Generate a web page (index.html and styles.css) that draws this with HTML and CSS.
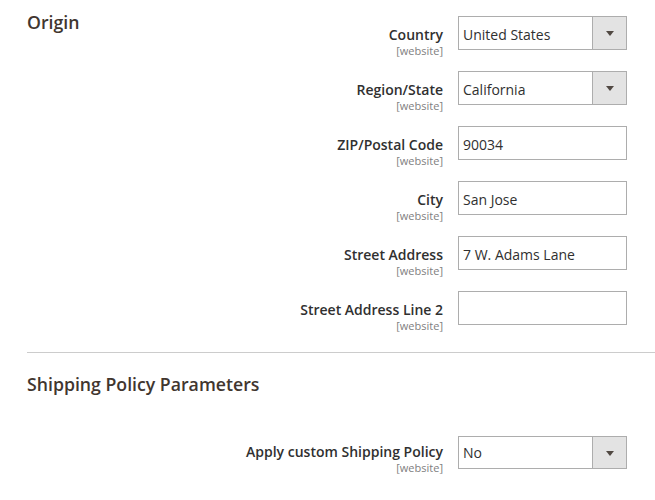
FILE: index.html
```
<!DOCTYPE html>
<html lang="en">
<head>
<meta charset="utf-8">
<title>Origin</title>
<link rel="stylesheet" href="styles.css">
</head>
<body>
<div class="page">
  <section class="section section-origin">
    <h2 class="section-title">Origin</h2>
    <div class="fields">
      <div class="label"><span class="label-text">Country</span><span class="scope">[website]</span></div>
      <div class="control select"><span class="value">United States</span><span class="arrow"><span class="tri"></span></span></div>

      <div class="label"><span class="label-text">Region/State</span><span class="scope">[website]</span></div>
      <div class="control select"><span class="value">California</span><span class="arrow"><span class="tri"></span></span></div>

      <div class="label"><span class="label-text">ZIP/Postal Code</span><span class="scope">[website]</span></div>
      <div class="control"><span class="value">90034</span></div>

      <div class="label"><span class="label-text">City</span><span class="scope">[website]</span></div>
      <div class="control"><span class="value">San Jose</span></div>

      <div class="label"><span class="label-text">Street Address</span><span class="scope">[website]</span></div>
      <div class="control"><span class="value">7 W. Adams Lane</span></div>

      <div class="label"><span class="label-text">Street Address Line 2</span><span class="scope">[website]</span></div>
      <div class="control"><span class="value"></span></div>
    </div>
  </section>

  <section class="section section-policy">
    <h2 class="section-title">Shipping Policy Parameters</h2>
    <div class="fields">
      <div class="label label-tight"><span class="label-text">Apply custom Shipping Policy</span><span class="scope">[website]</span></div>
      <div class="control select control-short"><span class="value value-high">No</span><span class="arrow"><span class="tri"></span></span></div>
    </div>
  </section>
</div>
</body>
</html>
```

FILE: styles.css
```
html, body {
  margin: 0;
  padding: 0;
  background: #ffffff;
}

body {
  font-family: "Open Sans", "Liberation Sans", sans-serif;
  color: #303030;
}

.page {
  width: 655px;
  padding-bottom: 20px;
}

.section {
  margin-left: 27px;
}

.section-origin {
  display: flex;
  padding-top: 14px;
  padding-bottom: 27px;
  border-bottom: 1px solid #cccccc;
}

.section-origin .section-title {
  width: 120px;
  flex: none;
}

.section-origin .fields {
  flex: 1;
  padding-top: 2px;
}

.section-title {
  margin: 0;
  font-size: 17.7px;
  line-height: 17px;
  font-weight: 600;
  color: #41362f;
}

.section-policy {
  padding-top: 23px;
}

.section-policy .fields {
  margin-top: 43px;
}

.fields {
  display: grid;
  grid-template-columns: 1fr 169px;
  grid-auto-rows: 34px;
  column-gap: 15px;
  row-gap: 21px;
  padding-right: 28px;
}

.label {
  display: flex;
  flex-direction: column;
  align-items: flex-end;
  padding-top: 9px;
  text-align: right;
}

.label-tight {
  padding-top: 6px;
}

.label-text {
  font-size: 14px;
  line-height: 19px;
  font-weight: 600;
  color: #303030;
}

.scope {
  font-size: 11px;
  line-height: 13px;
  color: #808080;
}

.control {
  box-sizing: border-box;
  height: 34px;
  border: 1px solid #adadad;
  background: #ffffff;
  display: flex;
  align-items: center;
}

.control-short {
  height: 33px;
}

.value {
  flex: 1;
  padding-left: 4px;
  padding-top: 2px;
  font-size: 14px;
  line-height: 19px;
  color: #303030;
  white-space: nowrap;
}

.value-high {
  padding-top: 0;
}

.arrow {
  box-sizing: border-box;
  width: 34px;
  height: 100%;
  background: #e3e3e3;
  border-left: 1px solid #adadad;
  display: flex;
  align-items: center;
  justify-content: center;
}

.tri {
  width: 0;
  height: 0;
  border-left: 4px solid transparent;
  border-right: 4px solid transparent;
  border-top: 5px solid #514943;
  margin-top: 1px;
}
```
